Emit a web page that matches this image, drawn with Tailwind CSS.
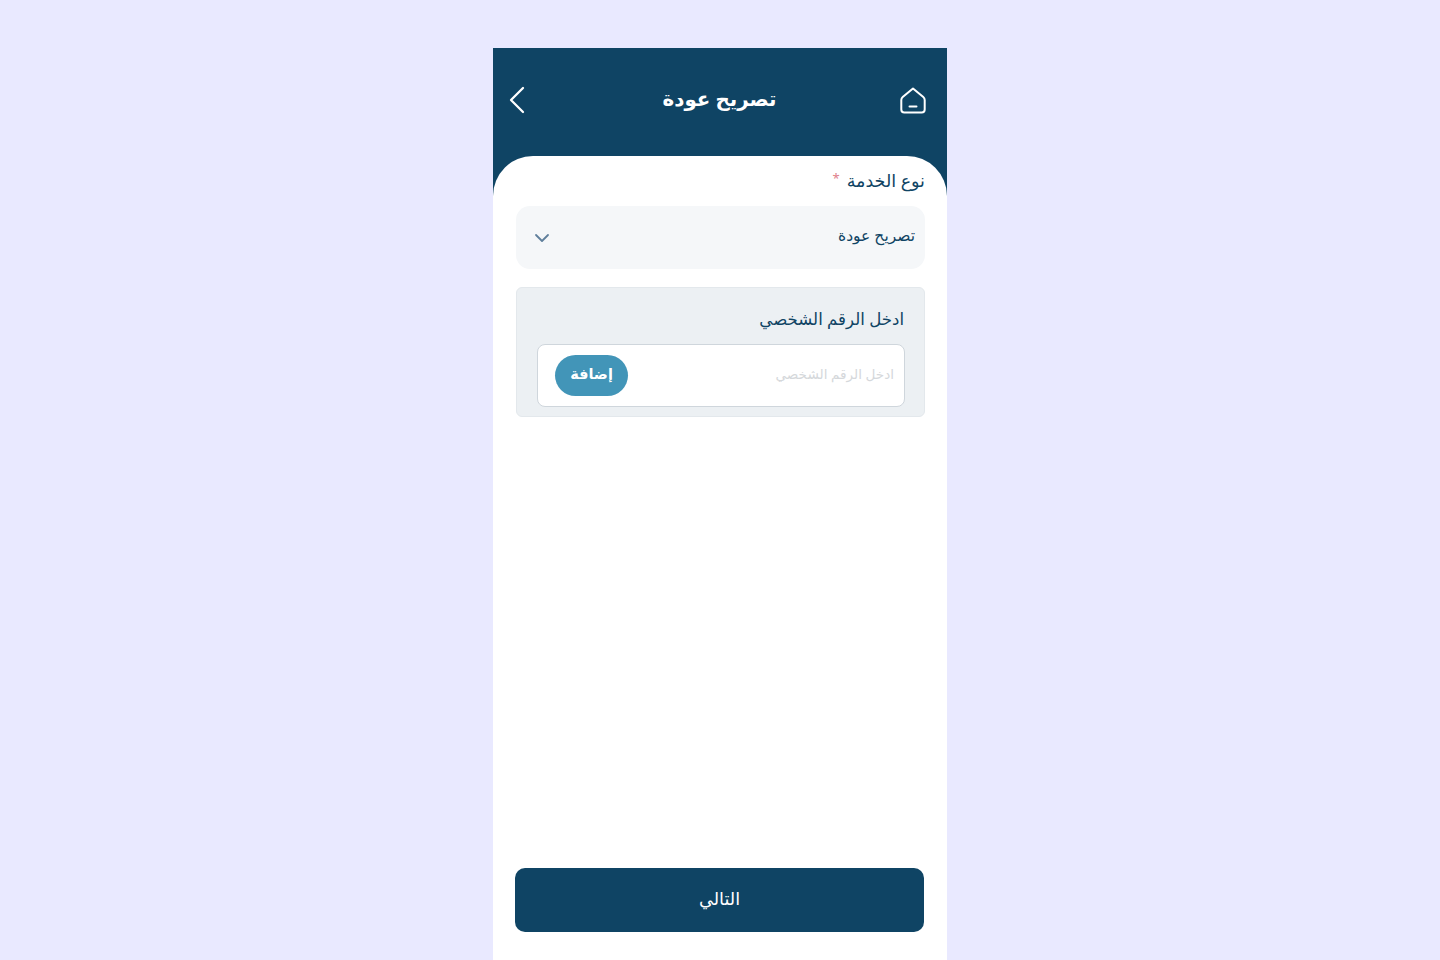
<!DOCTYPE html>
<html lang="ar" dir="rtl">
<head>
  <meta charset="UTF-8" />
  <title>تصريح عودة</title>
  <script src="https://cdn.jsdelivr.net/npm/@tailwindcss/browser@4"></script>
</head>
<body class="bg-[#e9e9ff] h-[960px] overflow-hidden font-['Noto_Sans','DejaVu_Sans',sans-serif] text-[#0f4464]">
  <div class="w-[454px] h-[912px] mt-[48px] mx-auto bg-[#0f4464] flex flex-col">
    <!-- header -->
    <header class="h-[108px] shrink-0 flex items-center justify-between pr-[20px] pl-[14px] pb-[4px] text-white">
      <div class="w-[28px] flex justify-start">
        <svg class="w-[28px] h-[28px]" viewBox="0 0 28 28" fill="none" stroke="currentColor" stroke-width="2" stroke-linecap="round" stroke-linejoin="round">
          <path d="M14 2.5 L24.3 11 Q25.7 12.2 25.7 14 V23.5 Q25.7 26.5 22.7 26.5 H5.3 Q2.3 26.5 2.3 23.5 V14 Q2.3 12.2 3.7 11 Z" />
          <path d="M10.5 20.5 H17.5" />
        </svg>
      </div>
      <h1 class="text-[19.8px] font-bold leading-none pb-[3px] pl-[5px]">تصريح عودة</h1>
      <div class="w-[28px] flex justify-end">
        <svg class="w-[20px] h-[30px]" viewBox="0 0 20 30" fill="none" stroke="currentColor" stroke-width="2.3" stroke-linecap="round" stroke-linejoin="round">
          <path d="M16 3 L4 15 L16 27" />
        </svg>
      </div>
    </header>

    <!-- sheet -->
    <main class="flex-1 bg-white rounded-t-[40px] flex flex-col pr-[22px] pl-[23px]">
      <label class="mt-[11px] h-[28px] flex items-center gap-[7px] text-[17.5px] leading-none">
        نوع الخدمة
        <span class="text-[#e0808a] text-[13px] -mt-[6px]">*</span>
      </label>

      <div class="mt-[11px] h-[63px] bg-[#f5f7f9] rounded-[14px] flex items-center justify-between pr-[10px] pl-[18px]">
        <span class="text-[15.5px] leading-none pb-[3px]">تصريح عودة</span>
        <svg class="w-[16px] h-[10px]" viewBox="0 0 16 10" fill="none" stroke="#5f7f9c" stroke-width="1.8" stroke-linecap="round" stroke-linejoin="round">
          <path d="M2 2 L8 8 L14 2" />
        </svg>
      </div>

      <section class="mt-[18px] h-[130px] bg-[#ecf0f3] border border-[#e3e8ec] rounded-[6px] pr-[19px] pl-[20px] pt-[16px]">
        <p class="h-[30px] flex items-center pr-[1px] text-[16.6px] leading-none">ادخل الرقم الشخصي</p>
        <div class="mt-[10px] h-[63px] bg-white border-[1.5px] border-[#cfd6dc] rounded-[8px] flex items-center justify-between pr-[10px] pl-[17px]">
          <span class="text-[13.6px] leading-none pb-[3px] text-[#d5d8db]">ادخل الرقم الشخصي</span>
          <button class="w-[73px] h-[41px] rounded-full bg-[#4295b8] text-white text-[14.5px] font-bold leading-none pb-[4px]">إضافة</button>
        </div>
      </section>

      <button class="mt-auto mb-[28px] h-[64px] w-[409px] mr-0 -translate-x-[1px] bg-[#0f4464] text-white text-[17.7px] rounded-[10px] pb-[4px]">التالي</button>
    </main>
  </div>
</body>
</html>
